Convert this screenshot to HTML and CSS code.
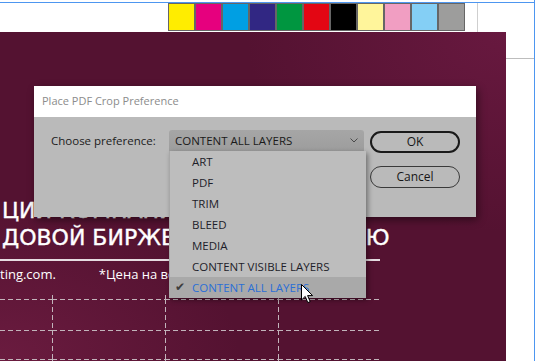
FILE: index.html
```html
<!DOCTYPE html>
<html lang="ru">
<head>
  <meta charset="UTF-8">
  <meta name="viewport" content="width=device-width, initial-scale=1">
  <title>Place PDF Crop Preference</title>
  <link rel="stylesheet" href="styles.css">
</head>
<body>

  <div class="screen">

    <div class="topbar">
      <div class="swatches">
        <span class="swatch sw-yellow"></span>
        <span class="swatch sw-magenta"></span>
        <span class="swatch sw-cyan"></span>
        <span class="swatch sw-navy"></span>
        <span class="swatch sw-green"></span>
        <span class="swatch sw-red"></span>
        <span class="swatch sw-black"></span>
        <span class="swatch sw-lemon"></span>
        <span class="swatch sw-pink"></span>
        <span class="swatch sw-sky"></span>
        <span class="swatch sw-grey"></span>
      </div>
      <div class="ruler-line"></div>
    </div>

    <div class="workspace">
      <div class="canvas">
        <h1 class="headline">
          <span>ЦИИ КОМПАНИЙ НА ФОН</span>
          <span>ДОВОЙ БИРЖЕ ЗА ОДНУ СЕССИЮ</span>
        </h1>
        <div class="rule"></div>
        <p class="note">ting.com.<span class="price">*Цена на весь пакет без НДС</span></p>

        <div class="grid">
          <div class="cell stub first"></div><div class="cell stub"></div><div class="cell stub"></div><div class="cell stub"></div>
          <div class="cell first"></div><div class="cell"></div><div class="cell"></div><div class="cell"></div>
          <div class="cell first"></div><div class="cell"></div><div class="cell"></div><div class="cell"></div>
          <div class="cell first"></div><div class="cell"></div><div class="cell"></div><div class="cell"></div>
        </div>
      </div>
      <div class="side">
        <div class="side-head"></div>
      </div>
    </div>

    <div class="dialog">
      <div class="dialog-title">Place PDF Crop Preference</div>
      <div class="dialog-body">
        <label class="field-label">Choose preference:</label>

        <div class="select">
          <div class="select-value">
            CONTENT ALL LAYERS
            <svg class="chevron" width="8" height="5" viewBox="0 0 8 5"><path d="M0.5 0.5 L4 4 L7.5 0.5" fill="none" stroke="#4a4a4a" stroke-width="1"/></svg>
          </div>
          <ul class="options">
            <li>ART</li>
            <li>PDF</li>
            <li>TRIM</li>
            <li>BLEED</li>
            <li>MEDIA</li>
            <li>CONTENT VISIBLE LAYERS</li>
            <li class="selected"><span class="check">✔</span>CONTENT ALL LAYERS</li>
          </ul>
        </div>

        <div class="buttons">
          <button class="btn btn-ok">OK</button>
          <button class="btn">Cancel</button>
        </div>
      </div>
    </div>

    <svg class="cursor" width="13" height="20" viewBox="0 0 13 20">
      <path d="M0.5 0.5 L0.5 16 L4.2 12.4 L6.8 18.6 L9.2 17.6 L6.6 11.6 L11.6 11.6 Z" fill="#fff" stroke="#000" stroke-width="1" stroke-linejoin="round"/>
    </svg>

  </div>

</body>
</html>
```

FILE: styles.css
```css
body {
  margin: 0;
  background: #fff;
  font-family: 'Open Sans', 'Noto Sans', sans-serif;
}

.screen {
  position: relative;
  width: 535px;
  height: 361px;
  overflow: hidden;
  border-right: 1px solid #4d96f0;
  box-sizing: border-box;
}

/* top strip with colour swatches */
.topbar {
  display: flex;
  align-items: stretch;
  margin-top: 2px;
  height: 30px;
  border-top: 1px solid #4d96f0;
  padding-left: 168px;
  box-sizing: border-box;
}

.swatches {
  display: flex;
}

.swatch {
  width: 27px;
  height: 28px;
  border: 1px solid #666;
  box-sizing: border-box;
}

.sw-yellow { background: #ffed00; }
.sw-magenta { background: #e6007e; }
.sw-cyan { background: #009fe3; }
.sw-navy { background: #312783; }
.sw-green { background: #009640; }
.sw-red { background: #e30613; }
.sw-black { background: #000; }
.sw-lemon { background: #fff59b; }
.sw-pink { background: #f19ec2; }
.sw-sky { background: #84cff5; }
.sw-grey { background: #9d9d9c; }

.ruler-line {
  width: 1px;
  margin-left: 12px;
  background: #cfcfcf;
}

.workspace {
  display: flex;
  height: 329px;
}

/* the document page */
.canvas {
  width: 506px;
  flex: none;
  padding-top: 165px;
  box-sizing: border-box;
  background:
    radial-gradient(ellipse 260px 200px at 100% 0%, rgba(120, 30, 75, 0.55), transparent),
    radial-gradient(ellipse 240px 160px at 0% 100%, rgba(125, 35, 75, 0.55), transparent),
    #541231;
  color: #fff;
}

.headline {
  margin: 0;
  padding-left: 2px;
  font-family: 'DejaVu Sans', sans-serif;
  font-weight: normal;
  font-size: 22px;
  line-height: 27px;
  letter-spacing: 0;
  -webkit-text-stroke: 0.4px #fff;
}

.headline span {
  display: block;
  white-space: nowrap;
}

.rule {
  width: 380px;
  height: 2px;
  margin-top: 8px;
  background: rgba(255, 255, 255, 0.85);
}

.note {
  margin: 4px 0 0;
  font-size: 13px;
  line-height: 18px;
  white-space: nowrap;
}

.price {
  margin-left: 43px;
}

.grid {
  display: grid;
  width: 380px;
  margin-top: 12px;
  grid-template-columns: 52px 113px 113px 102px;
  grid-template-rows: 4px 31px 29px 31px;
}

.cell {
  background:
    repeating-linear-gradient(90deg, #c2b4bb 0 5px, transparent 5px 8px) top left / 100% 1px no-repeat,
    repeating-linear-gradient(180deg, #c2b4bb 0 5px, transparent 5px 8px) top left / 1px 100% no-repeat;
}

.cell.stub {
  background:
    repeating-linear-gradient(180deg, #c2b4bb 0 5px, transparent 5px 8px) top left / 1px 100% no-repeat;
}

.cell.first {
  background:
    repeating-linear-gradient(90deg, #c2b4bb 0 5px, transparent 5px 8px) top left / 100% 1px no-repeat;
}

.cell.stub.first {
  background: none;
}

.side {
  flex: 1;
}

.side-head {
  height: 26px;
  border-bottom: 1px solid #bdbdbd;
}

/* modal dialog */
.dialog {
  position: absolute;
  left: 34px;
  top: 86px;
  width: 442px;
  box-shadow: 2px 3px 8px rgba(0, 0, 0, 0.45);
}

.dialog-title {
  height: 31px;
  padding-left: 8px;
  background: #fff;
  color: #8c8c8c;
  font-size: 11px;
  line-height: 29px;
}

.dialog-body {
  display: flex;
  align-items: flex-start;
  height: 100px;
  padding: 13px 0 0 17px;
  box-sizing: border-box;
  background: #bababa;
  color: #1c1c1c;
  font-size: 11.5px;
}

.field-label {
  width: 118px;
  line-height: 21px;
}

.select {
  position: relative;
  width: 195px;
}

.select-value {
  position: relative;
  height: 21px;
  padding-left: 6px;
  line-height: 21px;
  border-radius: 3px 3px 0 0;
  background: linear-gradient(#a6a6a6, #9d9d9d);
  color: #1a1a1a;
}

.chevron {
  position: absolute;
  right: 6px;
  top: 8px;
}

.options {
  position: absolute;
  top: 21px;
  left: 0;
  width: 197px;
  margin: 0;
  padding: 0;
  list-style: none;
  background: #bdbdbd;
  border-left: 1px solid #a8a8a8;
  box-sizing: border-box;
  box-shadow: 2px 2px 5px rgba(0, 0, 0, 0.4);
}

.options li {
  position: relative;
  height: 21px;
  padding-left: 22px;
  line-height: 21px;
  color: #1e1e2a;
}

.options li.selected {
  background: #a9a9a9;
  color: #2b6fd6;
}

.check {
  position: absolute;
  left: 5px;
  color: #3d3d3d;
  font-family: 'DejaVu Sans', sans-serif;
  font-size: 12px;
}

.buttons {
  display: flex;
  flex-direction: column;
  gap: 13px;
  margin: 1px 0 0 6px;
}

.btn {
  width: 90px;
  height: 22px;
  border: 1px solid #3a3a3a;
  border-radius: 11px;
  background: transparent;
  color: #161616;
  font-family: 'Open Sans', 'Noto Sans', sans-serif;
  font-size: 12px;
  line-height: 18px;
  padding: 0;
}

.btn-ok {
  border: 2px solid #1a1a1a;
}

.cursor {
  position: absolute;
  left: 301px;
  top: 284px;
}
```
